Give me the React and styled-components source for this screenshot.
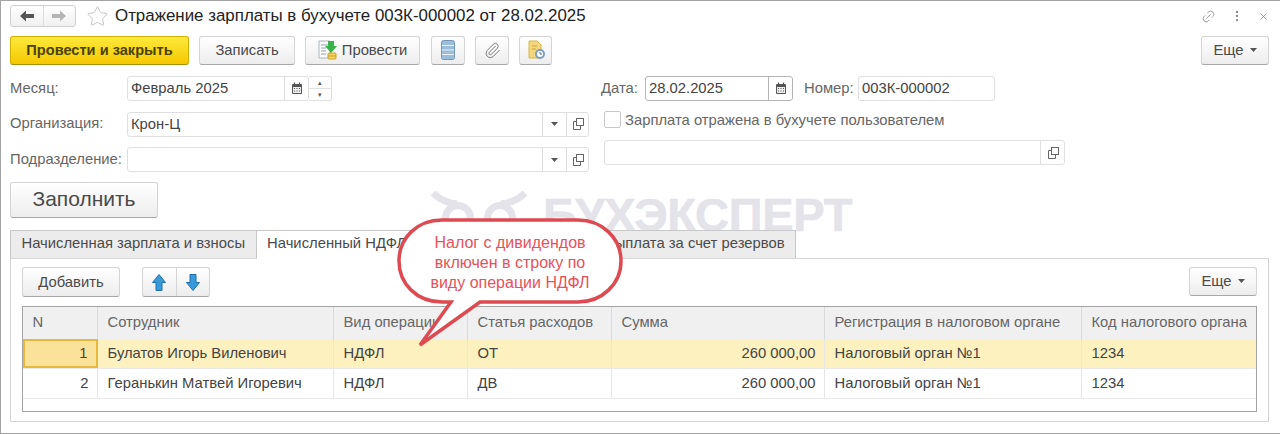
import styled, { createGlobalStyle } from "styled-components"
import { Star, Paperclip, Link2, MoreVertical, X } from "lucide-react"

const columns = ["N", "Сотрудник", "Вид операции", "Статья расходов", "Сумма", "Регистрация в налоговом органе", "Код налогового органа"]

const rows = [
  ["1", "Булатов Игорь Виленович", "НДФЛ", "ОТ", "260 000,00", "Налоговый орган №1", "1234"],
  ["2", "Геранькин Матвей Игоревич", "НДФЛ", "ДВ", "260 000,00", "Налоговый орган №1", "1234"],
]

function CalendarIcon() {
  return (
    <svg width="12" height="13" viewBox="0 0 12 13">
      <rect x="1" y="2" width="10" height="10" rx="1" fill="#555" />
      <rect x="2" y="5" width="8" height="6" fill="#eee" />
      <path d="M3 6h1v1H3zM5.500 6h1v1h-1zM8 6h1v1H8zM3 8.500h1v1H3zM5.500 8.500h1v1h-1zM8 8.500h1v1H8z" fill="#555" />
      <path d="M3.500 0.500v2M8.500 0.500v2" stroke="#555" strokeWidth="1.2" />
    </svg>
  )
}

function OpenIcon() {
  return (
    <svg width="12" height="12" viewBox="0 0 12 12" fill="none" stroke="#666">
      <rect x="4.500" y="0.500" width="7" height="7" fill="#fff" />
      <path d="M4.500 3.500h-3v8h7v-4" />
    </svg>
  )
}

function Triangle() {
  return (
    <svg width="7" height="4" viewBox="0 0 7 4">
      <path d="M0 0h7L3.500 4z" fill="#555" />
    </svg>
  )
}

function NavArrow({ flip, color }) {
  return (
    <svg width="14" height="12" viewBox="0 0 14 12" style={{ transform: flip ? "scaleX(-1)" : "none" }}>
      <path d="M0 6l6-5.500V4h8v4H6v3.500z" fill={color} />
    </svg>
  )
}

function BlueArrow({ down }) {
  return (
    <svg width="14" height="17" viewBox="0 0 14 17" style={{ transform: down ? "scaleY(-1)" : "none" }}>
      <path d="M7 .5l6.500 8H10v8H4v-8H.5z" fill="#3a9ad9" stroke="#1f6fae" />
    </svg>
  )
}

function PostIcon() {
  return (
    <svg width="20" height="20" viewBox="0 0 20 20">
      <path d="M1 1h11v17H1z" fill="#fdfdfd" stroke="#aab4bd" />
      <path d="M3 5h7M3 8h5M3 11h5M3 14h5" stroke="#8fa3b5" />
      <path d="M10 1h6v5h3l-6 7-6-7h3z" fill="#37b34a" />
      <rect x="10" y="13" width="8" height="6" rx="1" fill="#f4d35e" stroke="#c7a22c" />
      <path d="M10 16h8" stroke="#c7a22c" />
    </svg>
  )
}

function StackIcon() {
  return (
    <svg width="14" height="20" viewBox="0 0 14 20">
      <rect x=".5" y=".5" width="13" height="19" rx="2" fill="#9dbedb" stroke="#7396b8" />
      <path d="M1 5.500h12M1 10h12M1 14.500h12" stroke="#e8f0f7" strokeWidth="1.2" />
    </svg>
  )
}

function ReportIcon() {
  return (
    <svg width="20" height="20" viewBox="0 0 20 20">
      <path d="M3 1h8l4 4v13H3z" fill="#f4d77c" stroke="#d9b54e" />
      <path d="M6 6h5M6 9h4" stroke="#c9a53e" />
      <circle cx="14" cy="14" r="5" fill="#7d9cc0" />
      <circle cx="14" cy="14" r="3" fill="#fff" />
      <path d="M14 12v2h2" stroke="#4f6f95" fill="none" />
    </svg>
  )
}

function WatermarkLogo() {
  return (
    <svg width="100" height="46" viewBox="0 0 100 46" fill="none" stroke="#e3e3e9" strokeWidth="7">
      <circle cx="28" cy="27" r="12.500" />
      <circle cx="70" cy="27" r="12.500" />
      <path d="M3 2C10 9 18 12 27 13M95 2C88 9 80 12 71 13" />
    </svg>
  )
}

export default function App() {
  return (
    <Window>
      <GlobalStyle />

      <TitleRow>
        <NavGroup>
          <NavButton><NavArrow color="#555" /></NavButton>
          <NavButton><NavArrow flip color="#b5b5b5" /></NavButton>
        </NavGroup>
        <StarSlot><Star size={23} strokeWidth={0.9} color="#bdbdbd" /></StarSlot>
        <Title>Отражение зарплаты в бухучете 003К-000002 от 28.02.2025</Title>
        <WindowTools>
          <Link2 size={15} strokeWidth={1.2} color="#888" style={{ transform: "rotate(-45deg)" }} />
          <MoreVertical size={14} strokeWidth={2} color="#888" />
          <X size={11} strokeWidth={1.4} color="#777" />
        </WindowTools>
      </TitleRow>

      <Toolbar>
        <PrimaryButton>Провести и закрыть</PrimaryButton>
        <Button $width={96} $ml={10}>Записать</Button>
        <Button $width={115} $ml={10}><PostIcon /> Провести</Button>
        <Button $width={34} $ml={11}><StackIcon /></Button>
        <Button $width={34} $ml={10}><Paperclip size={17} strokeWidth={1.4} color="#777" /></Button>
        <Button $width={33} $ml={10}><ReportIcon /></Button>
        <MoreButton>Еще <Triangle /></MoreButton>
      </Toolbar>

      <Form>
        <LeftColumn>
          <FieldRow>
            <Label>Месяц:</Label>
            <InputGroup $width={182}>
              <InputText>Февраль 2025</InputText>
              <FieldButton $width={24}><CalendarIcon /></FieldButton>
            </InputGroup>
            <Spin>
              <SpinPart>▴</SpinPart>
              <SpinPart>▾</SpinPart>
            </Spin>
          </FieldRow>
          <FieldRow>
            <Label>Организация:</Label>
            <InputGroup $width={462}>
              <InputText>Крон-Ц</InputText>
              <FieldButton $width={24}><Triangle /></FieldButton>
              <FieldButton $width={22}><OpenIcon /></FieldButton>
            </InputGroup>
          </FieldRow>
          <FieldRow>
            <Label>Подразделение:</Label>
            <InputGroup $width={462}>
              <InputText />
              <FieldButton $width={24}><Triangle /></FieldButton>
              <FieldButton $width={22}><OpenIcon /></FieldButton>
            </InputGroup>
          </FieldRow>
        </LeftColumn>

        <RightColumn>
          <DateRow>
            <ShortLabel $width={44}>Дата:</ShortLabel>
            <InputGroup $width={148} $dark>
              <InputText>28.02.2025</InputText>
              <FieldButton $width={24} $dark><CalendarIcon /></FieldButton>
            </InputGroup>
            <ShortLabel $width={54} $ml={11}>Номер:</ShortLabel>
            <InputGroup $width={137}>
              <InputText>003К-000002</InputText>
            </InputGroup>
          </DateRow>
          <CheckRow>
            <CheckBox />
            <CheckLabel>Зарплата отражена в бухучете пользователем</CheckLabel>
          </CheckRow>
          <CommentRow>
            <InputGroup $width={461}>
              <InputText />
              <FieldButton $width={24}><OpenIcon /></FieldButton>
            </InputGroup>
          </CommentRow>
        </RightColumn>
      </Form>

      <FillButton>Заполнить</FillButton>

      <Tabs>
        <Tab>Начисленная зарплата и взносы</Tab>
        <Tab $active>Начисленный НДФЛ</Tab>
        <Tab $last>Выплата за счет резервов</Tab>
      </Tabs>

      <Panel>
        <PanelToolbar>
          <Button $width={98}>Добавить</Button>
          <ArrowGroup>
            <ArrowButton><BlueArrow /></ArrowButton>
            <ArrowButton><BlueArrow down /></ArrowButton>
          </ArrowGroup>
          <MoreButton>Еще <Triangle /></MoreButton>
        </PanelToolbar>

        <Table>
          <HeaderRow>
            {columns.map((title) => (
              <HeaderCell key={title}>{title}</HeaderCell>
            ))}
          </HeaderRow>
          {rows.map((row, rowIndex) => (
            <Row key={row[0]} $selected={rowIndex === 0}>
              {row.map((value, cellIndex) => (
                <Cell
                  key={cellIndex}
                  $right={cellIndex === 0 || cellIndex === 4}
                  $current={rowIndex === 0 && cellIndex === 0}
                >
                  {value}
                </Cell>
              ))}
            </Row>
          ))}
        </Table>
      </Panel>

      <Watermark>
        <WatermarkLogo />
        <WatermarkText>БУХЭКСПЕРТ</WatermarkText>
      </Watermark>

      <Callout>
        <svg width="228" height="132" viewBox="0 0 228 132">
          <path
            d="M45 3H181C205 3 224 21 224 44C224 67 205 85 181 85H83L23 128L54 85H45C20 85 2 67 2 44C2 21 20 3 45 3Z"
            fill="#fff"
            stroke="#dd4a52"
            strokeWidth="3.5"
          />
        </svg>
        <CalloutText>
          Налог с дивидендов
          <br />
          включен в строку по
          <br />
          виду операции НДФЛ
        </CalloutText>
      </Callout>
    </Window>
  )
}

const GlobalStyle = createGlobalStyle`
  html, body {
    margin: 0;
    padding: 0;
    background: #fff;
  }
  * {
    box-sizing: border-box;
  }
`

const Window = styled.div`
  position: relative;
  width: 1280px;
  height: 434px;
  overflow: hidden;
  padding: 0 11px 0 9px;
  border: 1px solid #a3a3a3;
  border-right: 0;
  background: #fff;
  font-family: "Liberation Sans", Arial, sans-serif;
  font-size: 14.800px;
  color: #4a4a4a;
`

const TitleRow = styled.div`
  display: flex;
  align-items: center;
  height: 35px;
  padding-bottom: 5px;
`

const NavGroup = styled.div`
  display: flex;
  width: 66px;
  height: 22px;
  border: 1px solid #cfcfcf;
  border-radius: 3px;
  background: linear-gradient(#fff, #f0f0f0);
`

const NavButton = styled.div`
  flex: 1;
  display: flex;
  align-items: center;
  justify-content: center;

  &:first-child {
    border-right: 1px solid #dcdcdc;
  }
`

const StarSlot = styled.div`
  display: flex;
  width: 39px;
  padding-left: 10px;
`

const Title = styled.div`
  font-size: 16.900px;
  color: #222;
  white-space: nowrap;
`

const WindowTools = styled.div`
  display: flex;
  align-items: center;
  gap: 14px;
  margin-left: auto;
`

const Toolbar = styled.div`
  display: flex;
  height: 29px;
`

const Button = styled.div`
  display: flex;
  align-items: center;
  justify-content: center;
  gap: 4px;
  width: ${(p) => p.$width}px;
  height: ${(p) => (p.$width === 98 ? 30 : 29)}px;
  margin-left: ${(p) => p.$ml || 0}px;
  padding-bottom: 1px;
  border: 1px solid #d4d4d4;
  border-bottom-color: #a8a8a8;
  border-radius: 3px;
  background: linear-gradient(#fff, #ededed);
  white-space: nowrap;
`

const PrimaryButton = styled.div`
  display: flex;
  align-items: center;
  justify-content: center;
  width: 179px;
  height: 29px;
  padding-bottom: 1px;
  border: 1px solid #d3b100;
  border-bottom-color: #a89000;
  border-radius: 3px;
  background: linear-gradient(#fde93c, #f5c800);
  font-weight: bold;
  font-size: 14.600px;
  color: #4a4200;
`

const MoreButton = styled.div`
  display: flex;
  align-items: center;
  justify-content: center;
  gap: 6px;
  width: 68px;
  height: 29px;
  margin-left: auto;
  padding-bottom: 1px;
  border: 1px solid #d4d4d4;
  border-bottom-color: #a8a8a8;
  border-radius: 3px;
  background: linear-gradient(#fff, #ededed);
`

const Form = styled.div`
  display: flex;
  margin-top: 11px;
  height: 96px;
`

const LeftColumn = styled.div`
  display: flex;
  flex-direction: column;
  gap: 10.500px;
  width: 591px;
`

const FieldRow = styled.div`
  display: flex;
  align-items: center;
  height: 25px;
`

const Label = styled.div`
  width: 117px;
  padding-bottom: 2px;
  color: #666;
  white-space: nowrap;
`

const InputGroup = styled.div`
  display: flex;
  width: ${(p) => p.$width}px;
  height: 25px;
  border: 1px solid ${(p) => (p.$dark ? "#b5b5b5" : "#dfdfdf")};
  border-radius: 3px;
  background: #fff;
`

const InputText = styled.div`
  flex: 1;
  padding: 0 3px;
  line-height: 22px;
  color: #444;
  white-space: nowrap;
`

const FieldButton = styled.div`
  display: flex;
  align-items: center;
  justify-content: center;
  width: ${(p) => p.$width}px;
  border-left: 1px solid ${(p) => (p.$dark ? "#b5b5b5" : "#dfdfdf")};
`

const Spin = styled.div`
  display: flex;
  flex-direction: column;
  width: 23px;
  height: 25px;
  border: 1px solid #dfdfdf;
  border-left: 0;
  border-radius: 0 3px 3px 0;
`

const SpinPart = styled.div`
  flex: 1;
  display: flex;
  align-items: center;
  justify-content: center;
  font-size: 7px;
  color: #555;

  &:first-child {
    border-bottom: 1px solid #dfdfdf;
  }
`

const RightColumn = styled.div`
  display: flex;
  flex-direction: column;
  width: 470px;
`

const DateRow = styled.div`
  display: flex;
  align-items: center;
  height: 25px;
`

const ShortLabel = styled.div`
  width: ${(p) => p.$width}px;
  margin-left: ${(p) => p.$ml || 0}px;
  padding-bottom: 2px;
  color: #666;
`

const CheckRow = styled.div`
  display: flex;
  align-items: center;
  height: 17px;
  margin: 10px 0 0 3px;
`

const CheckBox = styled.div`
  width: 17px;
  height: 17px;
  border: 1px solid #c8c8c8;
  border-radius: 2px;
`

const CheckLabel = styled.div`
  margin-left: 4px;
  color: #666;
`

const CommentRow = styled.div`
  margin: 12px 0 0 3px;
`

const FillButton = styled.div`
  display: flex;
  align-items: center;
  justify-content: center;
  width: 148px;
  height: 36px;
  margin-top: 10px;
  padding-bottom: 2px;
  border: 1px solid #d4d4d4;
  border-bottom-color: #a8a8a8;
  border-radius: 3px;
  background: linear-gradient(#fff, #ededed);
  font-size: 21px;
`

const Tabs = styled.div`
  position: relative;
  z-index: 1;
  display: flex;
  width: 786px;
  height: 28px;
  margin-top: 12px;
`

const Tab = styled.div`
  display: flex;
  align-items: center;
  margin-left: ${(p) => (p.$last ? "auto" : 0)};
  padding: 0 10.500px 3px;
  border: 1px solid #c8c8c8;
  border-bottom: ${(p) => (p.$active ? "1px solid #fff" : "0")};
  border-left-width: ${(p) => (p.$active ? 0 : "1px")};
  background: ${(p) => (p.$active ? "#fff" : "#ececec")};
  height: ${(p) => (p.$active ? "29px" : "28px")};
  white-space: nowrap;
`

const Panel = styled.div`
  height: 164px;
  padding: 8px 11px 0 11px;
  border: 1px solid #d6d6d6;
`

const PanelToolbar = styled.div`
  display: flex;
  height: 30px;
`

const ArrowGroup = styled.div`
  display: flex;
  width: 68px;
  height: 30px;
  margin-left: 22px;
  border: 1px solid #d4d4d4;
  border-bottom-color: #a8a8a8;
  border-radius: 3px;
  background: linear-gradient(#fff, #ededed);
`

const ArrowButton = styled.div`
  flex: 1;
  display: flex;
  align-items: center;
  justify-content: center;

  &:first-child {
    border-right: 1px solid #d4d4d4;
  }
`

const Table = styled.div`
  height: 106px;
  margin-top: 9px;
  border: 1px solid #a3a3a3;
`

const gridColumns = "75px 236px 134px 144px 213px 257px 1fr"

const HeaderRow = styled.div`
  display: grid;
  grid-template-columns: ${gridColumns};
  height: 32px;
  background: #f0f0f0;
`

const HeaderCell = styled.div`
  display: flex;
  align-items: center;
  padding: 0 9.500px 3px;
  border-right: 1px solid #dadada;
  color: #666;
  white-space: nowrap;

  &:last-child {
    border-right: 0;
  }
`

const Row = styled.div`
  display: grid;
  grid-template-columns: ${gridColumns};
  height: 30px;
  border-bottom: 1px solid #e8e8e8;
  background: ${(p) => (p.$selected ? "#fdf1c0" : "#fff")};
`

const Cell = styled.div`
  display: flex;
  align-items: center;
  justify-content: ${(p) => (p.$right ? "flex-end" : "flex-start")};
  padding: 0 8.500px 2px 9.500px;
  border-right: 1px solid #e6e6e6;
  ${(p) => p.$current && "border: 2px solid #e6b93c; background: #fbe29a;"}
  color: #444;
  white-space: nowrap;

  &:last-child {
    border-right: 0;
  }
`

const Watermark = styled.div`
  position: absolute;
  left: 429px;
  top: 190px;
  display: flex;
  align-items: flex-start;
  gap: 13px;
`

const WatermarkText = styled.div`
  margin-top: 4px;
  font-size: 47px;
  line-height: 40px;
  font-weight: bold;
  letter-spacing: -0.3px;
  -webkit-text-stroke: 0.6px #e3e3e9;
  color: #e3e3e9;
  white-space: nowrap;
`

const Callout = styled.div`
  position: absolute;
  z-index: 2;
  left: 396px;
  top: 216px;
  width: 228px;
  height: 132px;
`

const CalloutText = styled.div`
  position: absolute;
  left: 0;
  top: 16px;
  width: 226px;
  text-align: center;
  font-size: 16px;
  line-height: 20px;
  color: #e8515a;
`
